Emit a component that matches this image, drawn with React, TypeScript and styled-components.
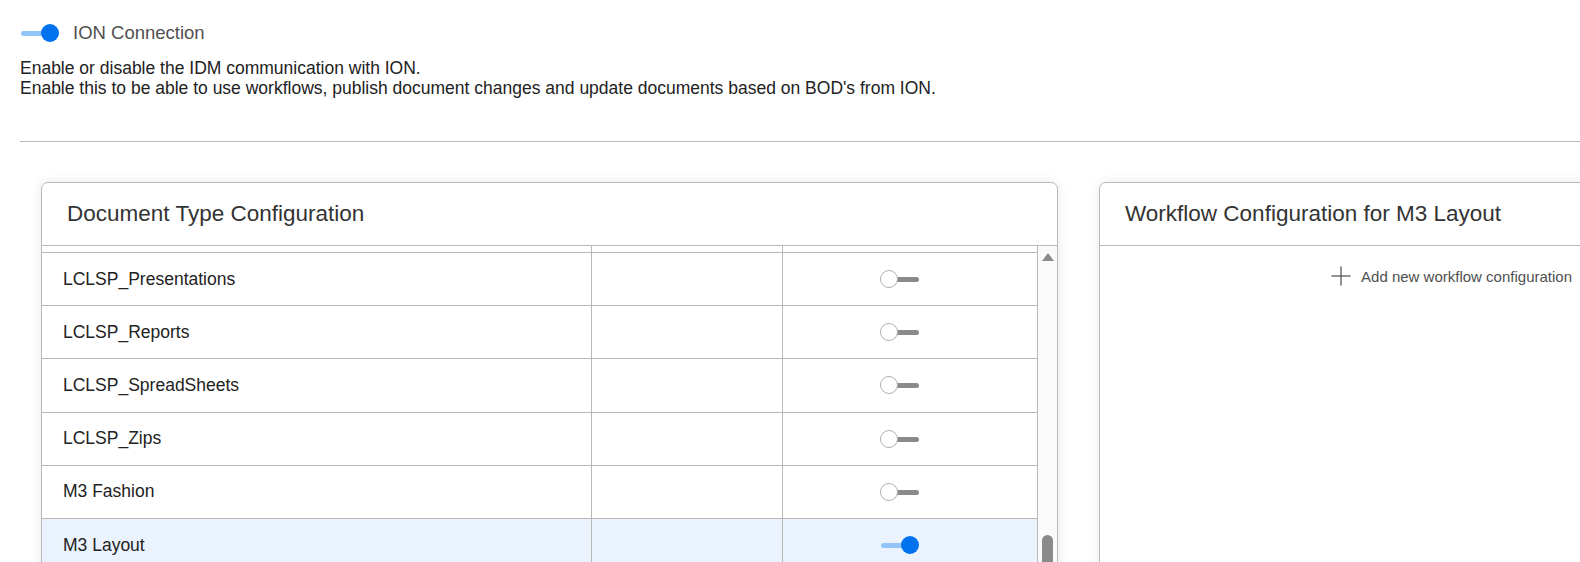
import React from "react";
import styled, { createGlobalStyle } from "styled-components";

const GlobalStyle = createGlobalStyle`
  html, body {
    margin: 0;
    padding: 0;
    background: #ffffff;
    overflow: hidden;
  }
  body {
    font-family: "Liberation Sans", Arial, sans-serif;
    color: #222222;
  }
`;

const Page = styled.div`
  height: 562px;
  padding: 20px 0 0 20px;
  box-sizing: border-box;
  overflow: hidden;
`;

const SwitchRow = styled.div`
  display: flex;
  align-items: center;
  gap: 13px;
  height: 26px;
`;

const SwitchLabel = styled.span`
  font-size: 18.5px;
  color: #505050;
`;

const Description = styled.p`
  margin: 12px 0 0;
  font-size: 17.5px;
  line-height: 20px;
  color: #222222;
`;

const Divider = styled.hr`
  margin: 43px 0 0;
  border: none;
  border-top: 1px solid #b8b8b8;
  height: 0;
`;

const Cards = styled.div`
  display: flex;
  gap: 41px;
  margin-top: 40px;
  padding-left: 21px;
  align-items: flex-start;
`;

const Card = styled.section<{ $width: number }>`
  flex: 0 0 auto;
  width: ${(p) => p.$width}px;
  box-sizing: border-box;
  border: 1px solid #b8b8b8;
  border-radius: 7px;
  background: #ffffff;
  box-shadow: 0 0 12px rgba(0, 0, 0, 0.09);
  overflow: hidden;
`;

const CardHeader = styled.header`
  height: 62px;
  display: flex;
  align-items: center;
  padding-left: 25px;
  border-bottom: 1px solid #b8b8b8;
  font-size: 22.5px;
  color: #333333;
`;

const CardBody = styled.div`
  display: flex;
  height: 340px;
`;

const Table = styled.div`
  flex: 1;
  display: flex;
  flex-direction: column;
`;

const Row = styled.div<{ $selected?: boolean; $head?: boolean }>`
  display: grid;
  grid-template-columns: 550px 191px 1fr;
  height: ${(p) => (p.$head ? 6 : 52.2)}px;
  border-bottom: 1px solid #b8b8b8;
  background: ${(p) => (p.$selected ? "#eaf3fd" : "#ffffff")};
  flex: 0 0 auto;
`;

const Cell = styled.div<{ $center?: boolean; $last?: boolean }>`
  display: flex;
  align-items: center;
  justify-content: ${(p) => (p.$center ? "center" : "flex-start")};
  padding: ${(p) => (p.$center ? "0 20px 0 0" : "0 0 0 21px")};
  border-right: ${(p) => (p.$last ? "none" : "1px solid #b8b8b8")};
  font-size: 17.5px;
  color: #222222;
`;

const Scrollbar = styled.div`
  flex: 0 0 19px;
  border-left: 1px solid #b8b8b8;
  background: #fafafa;
  display: flex;
  flex-direction: column;
  align-items: center;
`;

const ArrowUp = styled.div`
  margin-top: 7px;
  width: 0;
  height: 0;
  border-left: 6px solid transparent;
  border-right: 6px solid transparent;
  border-bottom: 8px solid #8a8a8a;
`;

const Thumb = styled.div`
  margin-top: 274px;
  width: 11px;
  height: 60px;
  border-radius: 6px;
  background: #8a8a8a;
`;

const AddArea = styled.div`
  display: flex;
  justify-content: flex-end;
  align-items: flex-start;
  height: 340px;
  box-sizing: border-box;
  padding: 20px 21px 0 0;
`;

const AddButton = styled.button`
  display: flex;
  align-items: center;
  gap: 10px;
  border: none;
  background: none;
  padding: 0;
  font-family: "Liberation Sans", Arial, sans-serif;
  font-size: 15px;
  color: #505050;
  height: 20px;
`;

const Track = styled.span<{ $on: boolean }>`
  position: relative;
  display: inline-block;
  width: 40px;
  height: 18px;
  flex: 0 0 auto;

  &::before {
    content: "";
    position: absolute;
    top: 7px;
    height: 5px;
    border-radius: 3px;
    left: ${(p) => (p.$on ? "1px" : "10px")};
    right: ${(p) => (p.$on ? "10px" : "1px")};
    background: ${(p) => (p.$on ? "#93c4f7" : "#8a8a8a")};
  }

  &::after {
    content: "";
    position: absolute;
    top: 0;
    box-sizing: border-box;
    width: 18px;
    height: 18px;
    border-radius: 50%;
    left: ${(p) => (p.$on ? "21px" : "0")};
    background: ${(p) => (p.$on ? "#0072ed" : "#ffffff")};
    border: ${(p) => (p.$on ? "none" : "1px solid #b0b0b0")};
  }
`;

const Switch: React.FC<{ on: boolean }> = ({ on }) => <Track $on={on} role="switch" aria-checked={on} />;

const PlusIcon = () => (
  <svg width="20" height="20" viewBox="0 0 20 20" fill="none" stroke="#555" strokeWidth="1.3">
    <line x1="10" y1="0.5" x2="10" y2="19.5" />
    <line x1="0.5" y1="10" x2="19.5" y2="10" />
  </svg>
);

const documentTypes = [
  { name: "LCLSP_Presentations", on: false },
  { name: "LCLSP_Reports", on: false },
  { name: "LCLSP_SpreadSheets", on: false },
  { name: "LCLSP_Zips", on: false },
  { name: "M3 Fashion", on: false },
  { name: "M3 Layout", on: true },
];

export default function App() {
  return (
    <>
      <GlobalStyle />
      <Page>
        <SwitchRow>
          <Switch on />
          <SwitchLabel>ION Connection</SwitchLabel>
        </SwitchRow>
        <Description>
          Enable or disable the IDM communication with ION.
          <br />
          Enable this to be able to use workflows, publish document changes and update documents based on BOD's from ION.
        </Description>
        <Divider />

        <Cards>
          <Card $width={1017}>
            <CardHeader>Document Type Configuration</CardHeader>
            <CardBody>
              <Table>
                <Row $head>
                  <Cell />
                  <Cell />
                  <Cell $last />
                </Row>
                {documentTypes.map((d) => (
                  <Row key={d.name} $selected={d.on}>
                    <Cell>{d.name}</Cell>
                    <Cell />
                    <Cell $center $last>
                      <Switch on={d.on} />
                    </Cell>
                  </Row>
                ))}
              </Table>
              <Scrollbar>
                <ArrowUp />
                <Thumb />
              </Scrollbar>
            </CardBody>
          </Card>

          <Card $width={495}>
            <CardHeader>Workflow Configuration for M3 Layout</CardHeader>
            <AddArea>
              <AddButton>
                <PlusIcon />
                Add new workflow configuration
              </AddButton>
            </AddArea>
          </Card>
        </Cards>
      </Page>
    </>
  );
}
